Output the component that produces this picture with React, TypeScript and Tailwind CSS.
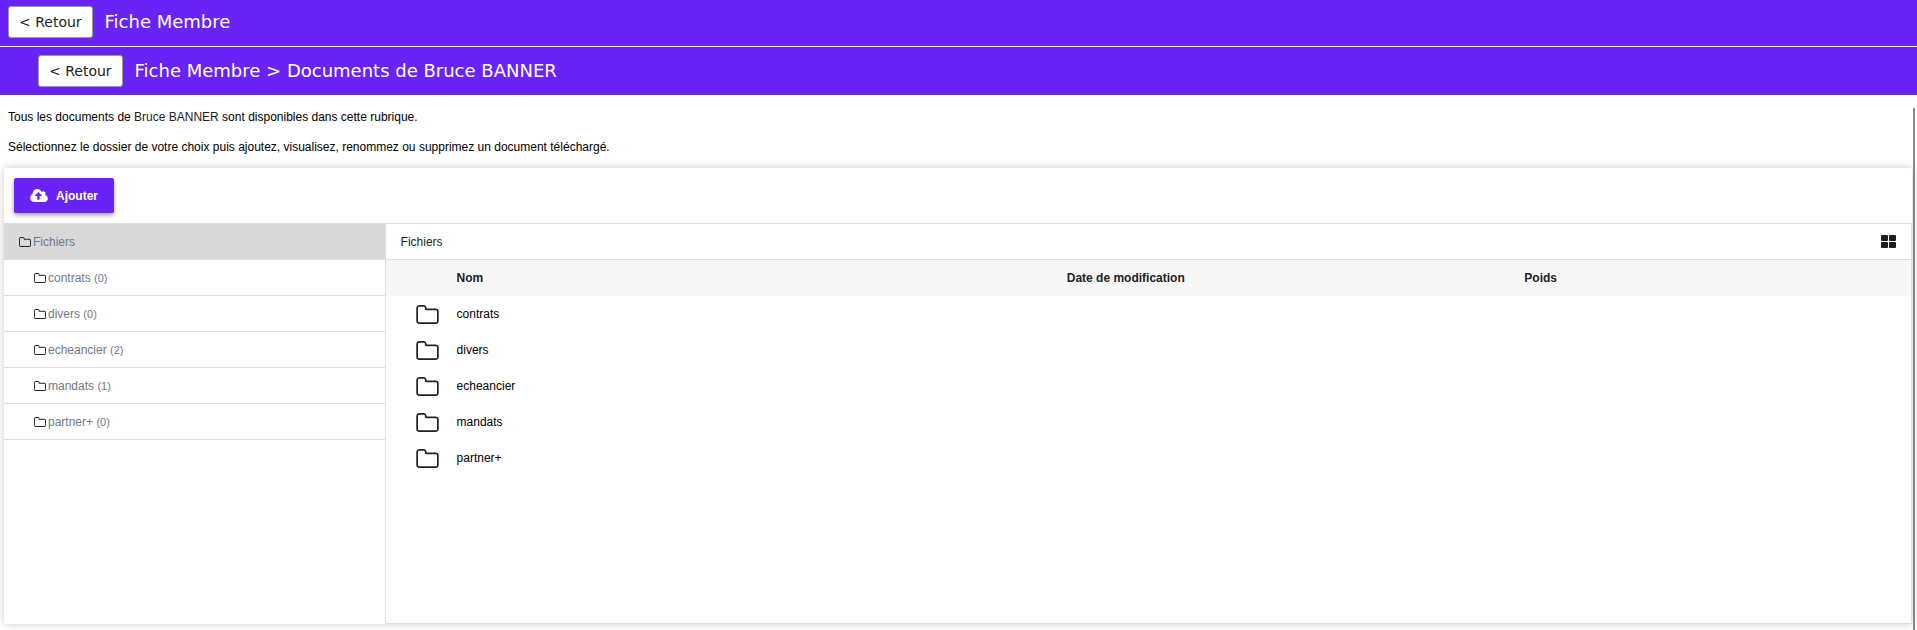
import type { ReactNode } from "react";

type Folder = {
  name: string;
  count: number;
};

const FOLDERS: Folder[] = [
  { name: "contrats", count: 0 },
  { name: "divers", count: 0 },
  { name: "echeancier", count: 2 },
  { name: "mandats", count: 1 },
  { name: "partner+", count: 0 },
];

function FolderIcon({ className }: { className: string }) {
  return (
    <svg viewBox="0 128 1664 1408" className={className} fill="currentColor" aria-hidden="true">
      <path d="M1536 1312V608q0-40-28-68t-68-28H736q-40 0-68-28t-28-68v-64q0-40-28-68t-68-28H224q-40 0-68 28t-28 68v960q0 40 28 68t68 28h1216q40 0 68-28t28-68zm128-704v704q0 92-66 158t-158 66H224q-92 0-158-66T0 1312V352q0-92 66-158t158-66h320q92 0 158 66t66 158v32h672q92 0 158 66t66 158z" />
    </svg>
  );
}

function CloudUploadIcon() {
  return (
    <svg viewBox="0 128 1920 1408" className="h-[13px] w-[18px]" fill="currentColor" aria-hidden="true">
      <path d="M1280 864q0-14-9-23L919 489q-9-9-23-9t-23 9L522 840q-10 12-10 24 0 14 9 23t23 9h224v352q0 13 9.5 22.5t22.5 9.5h192q13 0 22.5-9.5t9.5-22.5V896h224q13 0 22.5-9.5t9.5-22.5zm640 288q0 159-112.5 271.5T1536 1536H448q-185 0-316.5-131.5T0 1088q0-130 70-240t188-165q-2-30-2-43 0-212 150-362t362-150q156 0 285.5 87T1242 441q71-62 166-62 106 0 181 75t75 181q0 76-41 138 130 31 213.5 135.5T1920 1152z" />
    </svg>
  );
}

function GridIcon() {
  return (
    <svg viewBox="0 0 15 13" className="h-[13px] w-[15px]" fill="currentColor" aria-hidden="true">
      <rect x="0" y="0" width="7" height="6" rx="1" />
      <rect x="8" y="0" width="7" height="6" rx="1" />
      <rect x="0" y="7" width="7" height="6" rx="1" />
      <rect x="8" y="7" width="7" height="6" rx="1" />
    </svg>
  );
}

function TitleBar({ className, children }: { className: string; children: ReactNode }) {
  return (
    <div
      className={`flex items-start gap-3 bg-[#6923f5] font-['DejaVu_Sans',Verdana,sans-serif] ${className}`}
    >
      <button
        type="button"
        className="h-8 shrink-0 rounded-[3px] border border-[#999] bg-white px-[10px] text-sm text-[#222]"
      >
        &lt; Retour
      </button>
      <h1 className="text-lg leading-8 text-white">{children}</h1>
    </div>
  );
}

function Sidebar() {
  return (
    <nav className="w-1/5 shrink-0 border-r border-[#dedede] text-[#6c7a89]">
      <a
        href="#fichiers"
        className="flex h-9 items-center gap-0.5 border-b border-[#dedede] bg-[#d9d9d9] pl-[15px]"
      >
        <FolderIcon className="h-[10px] w-3 text-[#222]" />
        Fichiers
      </a>
      {FOLDERS.map((f) => (
        <a
          key={f.name}
          href={`#${f.name}`}
          className="flex h-9 items-center gap-0.5 border-b border-[#dedede] pl-[30px]"
        >
          <FolderIcon className="h-[10px] w-3 text-[#222]" />
          <span>
            {f.name} <span className="text-[11px]">({f.count})</span>
          </span>
        </a>
      ))}
    </nav>
  );
}

function FileList() {
  return (
    <section className="min-w-0 flex-1 border-r border-b border-[#dedede]">
      <div className="flex h-9 items-center justify-between border-b border-[#dedede] px-[15px] text-[#222]">
        <span>Fichiers</span>
        <button type="button" aria-label="Affichage en grille" className="text-[#1c1c1c]">
          <GridIcon />
        </button>
      </div>
      <table className="w-full table-fixed text-left">
        <thead>
          <tr className="h-9 bg-[#f7f7f7] text-[#222]">
            <th className="w-[71px]"></th>
            <th className="w-2/5 font-bold">Nom</th>
            <th className="w-[30%] font-bold">Date de modification</th>
            <th className="font-bold">Poids</th>
          </tr>
        </thead>
        <tbody>
          {FOLDERS.map((f) => (
            <tr key={f.name} className="h-9">
              <td className="pl-[30px]">
                <FolderIcon className="h-[19px] w-[23px] text-[#222]" />
              </td>
              <td>{f.name}</td>
              <td></td>
              <td></td>
            </tr>
          ))}
        </tbody>
      </table>
    </section>
  );
}

export default function App() {
  return (
    <div className="flex min-h-screen flex-col bg-white font-['Liberation_Sans',Arial,sans-serif] text-xs text-black">
      <TitleBar className="mb-px px-2 pt-1.5 pb-2">Fiche Membre</TitleBar>
      <TitleBar className="pt-2 pr-2 pb-2 pl-[38px]">
        Fiche Membre &gt; Documents de Bruce BANNER
      </TitleBar>

      <div className="flex flex-1">
        <main className="min-w-0 flex-1 pt-[14px] pb-1.5 pl-1">
          <p className="px-1 leading-4">
            Tous les documents de <span className="text-[#222]">Bruce BANNER</span> sont disponibles
            dans cette rubrique.
          </p>
          <p className="mt-[14px] px-1 leading-4">
            Sélectionnez le dossier de votre choix puis ajoutez, visualisez, renommez ou supprimez un
            document téléchargé.
          </p>

          <div className="mt-[13px] rounded-[3px] bg-white shadow-[0_0_10px_rgba(0,0,0,0.2)]">
            <div className="border-b border-[#dedede] p-[10px]">
              <button
                type="button"
                className="flex h-[35px] items-center gap-2 rounded-xs bg-[#6923f5] px-4 font-bold text-white shadow-[0_2px_4px_rgba(0,0,0,0.4)]"
              >
                <CloudUploadIcon />
                Ajouter
              </button>
            </div>
            <div className="flex min-h-[400px]">
              <Sidebar />
              <FileList />
            </div>
          </div>
        </main>

        {/* scroll thumb */}
        <div className="z-10 mt-[13px] mr-0.5 ml-px w-0.5 bg-[#888]" />
      </div>
    </div>
  );
}
